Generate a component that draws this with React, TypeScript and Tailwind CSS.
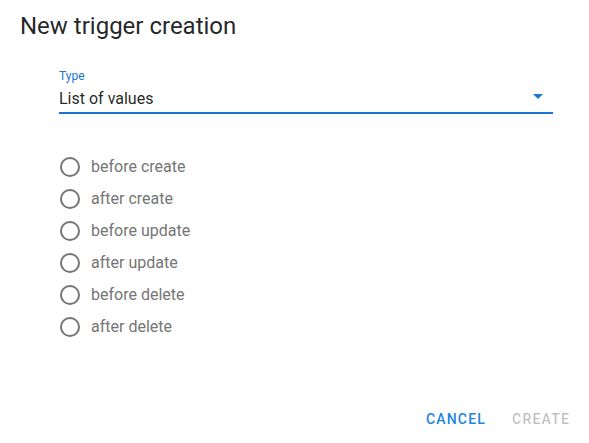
const options = [
  "before create",
  "after create",
  "before update",
  "after update",
  "before delete",
  "after delete",
]

export default function App() {
  return (
    <div
      className="w-[589px] h-[443px] bg-white flex flex-col text-[rgba(0,0,0,0.87)]"
      style={{ fontFamily: "Roboto, 'Liberation Sans', sans-serif" }}
    >
      <h2 className="pl-5 pt-[10px] text-[24px] leading-8 font-normal">New trigger creation</h2>

      <div className="ml-[59px] w-[494px] mt-[27px]">
        <div className="text-[12px] leading-[14px] text-[#1976d2]">Type</div>
        <div className="relative flex items-center h-[26px] mt-[5px] border-b-2 border-[#1976d2]">
          <span className="text-[16px] leading-5 pb-[2px]">List of values</span>
          <svg className="absolute right-[3px] top-[-4px]" width="24" height="24" viewBox="0 0 24 24">
            <path d="M7 10l5 5 5-5z" fill="#1976d2" />
          </svg>
        </div>
      </div>

      <div className="ml-[60px] mt-[37px] flex flex-col">
        {options.map((o) => (
          <label key={o} className="flex items-center h-8 gap-[11px]">
            <span className="w-5 h-5 rounded-full border-2 border-[#757575]" />
            <span className="text-[16px] text-[#757575]">{o}</span>
          </label>
        ))}
      </div>

      <div className="mt-auto flex justify-end items-center gap-[26px] pr-[19px] pb-[13px]">
        <button className="text-[14px] font-medium tracking-[1.2px] text-[#2185e0]">CANCEL</button>
        <button className="text-[14px] font-medium tracking-[1.2px] text-[rgba(0,0,0,0.26)]" disabled>
          CREATE
        </button>
      </div>
    </div>
  )
}
